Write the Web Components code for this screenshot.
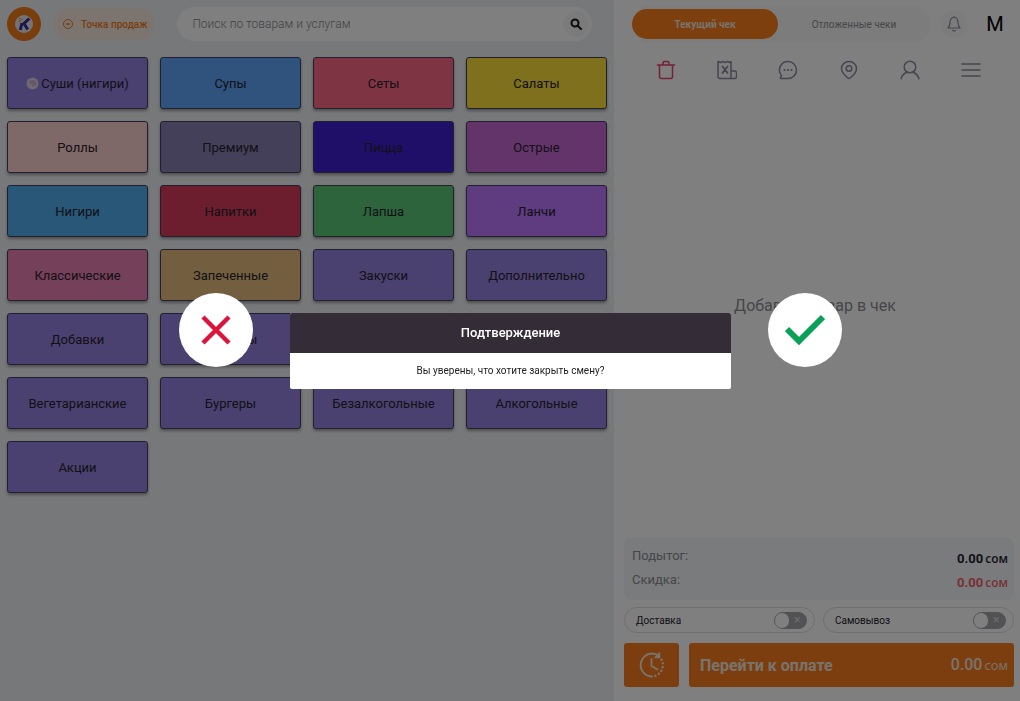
<!DOCTYPE html>
<html lang="ru">
<head>
<meta charset="utf-8">
<title>Точка продаж</title>
<style>
html,body{margin:0;height:100%}
body{font-family:Roboto,"Noto Sans",sans-serif;color:#24222c;background:#fff}
</style>
</head>
<body>
<pos-app></pos-app>

<template id="t-app">
<style>
:host{display:grid;grid-template-columns:minmax(0,1fr) 406px;min-height:100vh}
.catalog{background:#eff1f4;display:flex;flex-direction:column;gap:16px;padding:7px 7px 12px}
.grid{display:grid;grid-template-columns:repeat(4,minmax(0,1fr));gap:12px}
</style>
<main class="catalog">
  <pos-topbar></pos-topbar>
  <div class="grid"></div>
</main>
<pos-receipt></pos-receipt>
<pos-confirm>
  <span slot="title">Подтверждение</span>
  Вы уверены, что хотите закрыть смену?
</pos-confirm>
</template>

<template id="t-topbar">
<style>
:host{display:flex;align-items:center;height:34px}
.logo{width:34px;height:34px;flex:none}
.point{font:500 10px Roboto,sans-serif;color:#f47b20;background:#f7e9df;border:0;border-radius:16px;height:32px;padding:0 8px;margin-left:12px;display:flex;align-items:center;gap:6px;white-space:nowrap}
.search{flex:1;margin:0 15px 0 22px;height:34px;border-radius:17px;background:#fff;display:flex;align-items:center;padding:0 3px 0 15px}
input{flex:1;min-width:0;border:0;outline:0;background:none;font:300 12px Roboto,sans-serif;padding:0;color:#333}
input::placeholder{color:#85858a;opacity:1}
.go{width:26px;height:26px;border:0;border-radius:50%;background:#f7f7f8;padding:0;display:grid;place-items:center}
svg{display:block}
</style>
<svg class="logo" viewBox="0 0 34 34" role="img" aria-label="K"><circle cx="17" cy="17" r="17" fill="#f07c1c"/><circle cx="17" cy="17" r="9" fill="#e8e8ee"/><path d="M15 16L13.300 23M22.300 11.500L16 17.300M17 16.500l3.700 6" fill="none" stroke="#3a2c9e" stroke-width="3"/><path d="M12 11.500h1.500M14.500 12.500H16M12 13.800h2" stroke="#f07c1c" stroke-width="1.200"/></svg>
<button class="point"><svg width="14" height="12" viewBox="0 0 14 12"><circle cx="7" cy="6" r="4.500" fill="none" stroke="#f47b20"/><path d="M4.800 6h3.400" stroke="#f47b20" stroke-width="1.200"/><path d="M6.500 4.200l2.500 1.800-2.500 1.800z" fill="#f47b20"/></svg>Точка продаж</button>
<label class="search"><input type="text" placeholder="Поиск по товарам и услугам" aria-label="Поиск по товарам и услугам"><button class="go" aria-label="Найти"><svg width="12" height="12" viewBox="0 0 12 12" fill="none" stroke="#17151f" stroke-width="2"><circle cx="5" cy="5" r="3.500"/><path d="M7.600 7.600L11 11" stroke-linecap="round"/></svg></button></label>
</template>

<template id="t-tile">
<style>
:host{display:block}
button{width:100%;height:52px;border:1px solid #45415c;border-radius:3px;background:var(--tile,#9682e0);font:400 13px Roboto,sans-serif;color:#24222c;display:flex;align-items:center;justify-content:center;gap:2px;padding:0 4px;box-shadow:0 2px 3px rgba(0,0,0,.35);white-space:nowrap}
svg{display:none}
:host([badge]) svg{display:block}
</style>
<button><svg width="13" height="13" viewBox="0 0 13 13"><circle cx="6.500" cy="6.500" r="6" fill="#d8d3ea"/><path d="M3 6q3.500-4 7 0-1 3-4 2.500M4.500 6.500q2-1.500 4 0" fill="none" stroke="#d48aa8"/></svg><slot></slot></button>
</template>

<template id="t-receipt">
<style>
:host{display:flex;flex-direction:column;background:#fff;padding:6px 6px 14px 10px;box-sizing:border-box}
header{display:flex;align-items:center;height:36px;padding-left:8px}
.tabs{flex:1;display:grid;grid-template-columns:146px 1fr;align-items:center;height:36px;background:#f8f8f9;border-radius:18px}
.tabs button{font:400 10px Roboto,sans-serif;color:#8d8d92;border:0;background:none;height:30px;border-radius:15px;padding:0;white-space:nowrap}
.tabs .on{background:#fa7e1a;color:#f2e6dc;font-weight:700}
.bell{width:28px;height:28px;border:0;border-radius:50%;background:#f9f9fa;padding:0;display:grid;place-items:center;margin-left:10px}
.user{font:400 20px Roboto,sans-serif;color:#000;border:0;background:none;padding:0;width:34px;margin:0 2px 0 10px}
nav{display:grid;grid-template-columns:repeat(6,1fr);margin:15px 13px 0 11px;height:26px}
nav button{border:0;background:none;padding:0;display:grid;place-items:center}
svg{display:block;fill:none;stroke:#8c8aa0;stroke-width:1.500;stroke-linecap:round;stroke-linejoin:round}
.empty{margin:213px 0 0;padding-right:8px;text-align:center;font-size:16px;line-height:20px;color:#8d8d92;flex:1}
dl{margin:0;background:#f3f6fa;border-radius:8px;padding:7px 6px 8px 8px;display:grid}
dl div{display:flex;justify-content:space-between;height:24px}
dt{font-size:13px;line-height:24px;color:#8d8d92}
dd{margin:0;padding-top:5px}
.discount{color:#f4606a}
.modes{display:grid;grid-template-columns:1fr 1fr;gap:8px;margin-top:7px}
.pay{display:grid;grid-template-columns:55px 1fr;gap:10px;margin-top:10px}
.pay button{height:44px;border:0;border-radius:3px;background:#f97d1c;color:#fff;padding:0}
.pay .later{display:grid;place-items:center}
.pay .go{display:flex;justify-content:space-between;align-items:center;padding:0 6px 0 11px;font:700 16px Roboto,sans-serif;color:#f2e6dc;white-space:nowrap}
.later svg{stroke:#f2e6dc}
</style>
<header>
  <div class="tabs"><button class="on">Текущий чек</button><button>Отложенные чеки</button></div>
  <button class="bell" aria-label="Уведомления"><svg width="16" height="18" viewBox="0 0 16 18" style="stroke-width:1.200"><path d="M2 13h12q-2-2-2-5.500C12 4 10.500 2.500 8 2.500S4 4 4 7.500Q4 11 2 13zM6.800 15.500q1.200 1 2.400 0M8 2.500V1.500"/></svg></button>
  <button class="user">М</button>
</header>
<nav aria-label="Действия с чеком">
  <button aria-label="Очистить"><svg width="20" height="20" viewBox="0 0 20 20" style="stroke:#e8406c"><path d="M1.500 5h17M3.500 5v11.500q0 2 2 2h9q2 0 2-2V5M7 4.500V3q0-1.500 1.500-1.500h3Q13 1.500 13 3v1.500"/></svg></button>
  <button aria-label="Отмена чека"><svg width="20" height="20" viewBox="0 0 20 20"><path d="M15 18.500H3q-2 0-2-2V1.500l2.500 1 2-1 2.500 1 2.500-1 2.500 1 1-1v17M15 11h2.500q2 0 2 2v3.500q0 2-2 2H15"/><path d="M5.500 6.500l5 6.500M10.500 6.500l-5 6.500" stroke-width="1.800"/></svg></button>
  <button aria-label="Комментарий"><svg width="20" height="20" viewBox="0 0 20 20"><path d="M10 1.500a8.500 8.500 0 1 1 0 17H2.500v-1l1-2A8.500 8.500 0 0 1 10 1.500z"/><path d="M6.500 10h.1M10 10h.1M13.500 10h.1" stroke-width="2"/></svg></button>
  <button aria-label="Адрес"><svg width="20" height="20" viewBox="0 0 20 20"><path d="M10 18.500q-1 0-2.500-1.800Q2.500 12.500 2.500 8.500a7.500 7 0 0 1 15 0q0 4-5 8.200Q11 18.500 10 18.500z"/><circle cx="10" cy="8.500" r="2.800"/></svg></button>
  <button aria-label="Клиент"><svg width="20" height="20" viewBox="0 0 20 20"><circle cx="10" cy="7" r="5.800"/><path d="M1 18.800q1.500-5 6-6.500M19 18.800q-1.500-5-6-6.500"/></svg></button>
  <button aria-label="Меню"><svg width="20" height="20" viewBox="0 0 20 20"><path d="M1 4h18M1 10h18M1 16h18"/></svg></button>
</nav>
<p class="empty">Добавьте товар в чек</p>
<dl>
  <div><dt>Подытог:</dt><dd><pos-amount>0.00</pos-amount></dd></div>
  <div><dt>Скидка:</dt><dd class="discount"><pos-amount>0.00</pos-amount></dd></div>
</dl>
<div class="modes"><pos-switch>Доставка</pos-switch><pos-switch>Самовывоз</pos-switch></div>
<div class="pay">
  <button class="later" aria-label="Отложить"><svg width="26" height="26" viewBox="0 0 26 26"><path d="M11 24.300A11.500 11.500 0 0 1 13 1.500q4 0 7 2.500" stroke-width="1.800"/><path d="M20.500 1v4.500H16z" stroke-width="1.500" fill="#f2e6dc"/><path d="M22.500 7.500A11.500 11.500 0 0 1 12 24.500" stroke-width="2.400" stroke-dasharray="0.100 3.800"/><path d="M12.500 7v7l6 3.500" stroke-width="1.800"/></svg></button>
  <button class="go"><span>Перейти к оплате</span><pos-amount large>0.00</pos-amount></button>
</div>
</template>

<template id="t-amount">
<style>
:host{display:flex;align-items:baseline;gap:2px;font-weight:700;font-size:13px;line-height:20px}
:host([large]){font-size:16px;font-weight:500}
small{font:600 12px "Open Sans","Noto Sans",sans-serif}
:host([large]) small{font-size:13px;font-weight:400}
</style>
<slot></slot><small>сом</small>
</template>

<template id="t-switch">
<style>
:host{display:block}
label{display:flex;align-items:center;justify-content:space-between;height:24px;border:1px solid #dfdfe4;border-radius:13px;padding:0 7px 0 11px;font-size:10px}
input{appearance:none;margin:0;width:33px;height:17px;border-radius:9px;border:1px solid #a5a5a8;background:#a5a5a8;display:flex;align-items:center;justify-content:space-between;padding:0 5px 0 0;box-sizing:border-box}
input::before{content:"";width:14px;height:15px;border-radius:8px;background:#fff}
input::after{content:"✕";font:9px/15px "DejaVu Sans",sans-serif;color:#e0e0e0}
</style>
<label><slot></slot><input type="checkbox" role="switch"></label>
</template>

<template id="t-confirm">
<style>
:host{position:fixed;inset:0;z-index:10;display:flex;align-items:center;justify-content:center;gap:37px;background:rgba(0,0,0,.5);padding:1px 0 0 1px;box-sizing:border-box}
section{width:441px;border-radius:2px;overflow:hidden;background:#fff;text-align:center}
h2{margin:0;background:#342d38;color:#fff;font-size:13px;font-weight:500;line-height:40px}
p{margin:0;font-size:10px;line-height:36px;color:#222}
button{width:74px;height:74px;flex:none;border:0;border-radius:50%;background:#fff;padding:0;margin-bottom:42px;display:grid;place-items:center}
svg{display:block;fill:none}
</style>
<button aria-label="Нет"><svg width="30" height="30" viewBox="0 0 30 30" stroke="#dc143c" stroke-width="4.500"><path d="M2 2l26 26M28 2L2 28"/></svg></button>
<section role="dialog" aria-modal="true" aria-labelledby="h"><h2 id="h"><slot name="title"></slot></h2><p><slot></slot></p></section>
<button aria-label="Да"><svg width="40" height="32" viewBox="0 0 40 32" stroke="#0aa057" stroke-width="6"><path d="M2 15l12 12L38 3" stroke-linejoin="miter"/></svg></button>
</template>

<script>
const define = (name, id, setup) => customElements.define(name, class extends HTMLElement {
  constructor() {
    super();
    const root = this.attachShadow({ mode: 'open' });
    root.append(document.getElementById(id).content.cloneNode(true));
    if (setup) setup(root);
  }
});

const categories = [
  ['Суши (нигири)', '#9682e0'], ['Супы', '#5ea6fa'], ['Сеты', '#fe6886'], ['Салаты', '#fce03a'],
  ['Роллы', '#ffd0d0'], ['Премиум', '#8a80b2'], ['Пицца', '#401ed2'], ['Острые', '#c668d4'],
  ['Нигири', '#52aeee'], ['Напитки', '#d83c5c'], ['Лапша', '#5cc878'], ['Ланчи', '#bc78ff'],
  ['Классические', '#ea80b4'], ['Запеченные', '#e6be80'], ['Закуски', '#9682e0'], ['Дополнительно', '#9682e0'],
  ['Добавки', '#9682e0'], ['Десерты', '#9682e0'], ['', '#9682e0'], ['', '#9682e0'],
  ['Вегетарианские', '#9682e0'], ['Бургеры', '#9682e0'], ['Безалкогольные', '#9682e0'], ['Алкогольные', '#9682e0'],
  ['Акции', '#9682e0']
];

define('pos-amount', 't-amount');
define('pos-switch', 't-switch');
define('pos-tile', 't-tile');
define('pos-topbar', 't-topbar');
define('pos-receipt', 't-receipt');
define('pos-confirm', 't-confirm');
define('pos-app', 't-app', root => {
  const grid = root.querySelector('.grid');
  categories.forEach(([name, color], i) => {
    const tile = document.createElement('pos-tile');
    tile.textContent = name;
    tile.style.setProperty('--tile', color);
    if (i === 0) tile.setAttribute('badge', '');
    grid.append(tile);
  });
});
</script>
</body>
</html>
